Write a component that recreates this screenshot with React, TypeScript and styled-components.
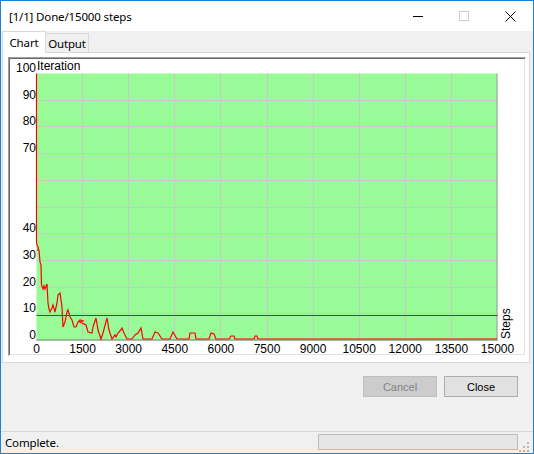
import React from "react";
import styled, { createGlobalStyle } from "styled-components";

const GlobalStyle = createGlobalStyle`
  html, body {
    margin: 0;
    padding: 0;
    background: #ffffff;
  }
  body {
    font-family: "Segoe UI", "Noto Sans", "Liberation Sans", sans-serif;
  }
`;

const uiText = `
  font-size: 11.5px;
  letter-spacing: -0.15px;
  color: #000000;
`;

const Window = styled.div`
  width: 534px;
  height: 454px;
  box-sizing: border-box;
  border: 1px solid #1883d7;
  display: flex;
  flex-direction: column;
  background: #f0f0f0;
`;

const TitleBar = styled.div`
  height: 30px;
  background: #ffffff;
  display: flex;
  align-items: center;
`;

const Title = styled.div`
  flex: 1;
  padding-left: 8px;
  ${uiText}
`;

const CaptionButton = styled.div`
  width: 46px;
  height: 30px;
  display: flex;
  align-items: center;
  justify-content: center;
`;

const TabStrip = styled.div`
  height: 21px;
  display: flex;
  align-items: flex-end;
  padding-left: 1px;
`;

const Tab = styled.div<{ $active?: boolean; $width: number }>`
  box-sizing: border-box;
  width: ${(p) => p.$width}px;
  height: ${(p) => (p.$active ? 22 : 19)}px;
  margin-bottom: ${(p) => (p.$active ? -1 : 0)}px;
  background: ${(p) => (p.$active ? "#ffffff" : "#f0f0f0")};
  border: 1px solid #d9d9d9;
  border-bottom: none;
  border-left: ${(p) => (p.$active ? "1px solid #d9d9d9" : "none")};
  ${uiText}
  display: flex;
  align-items: center;
  justify-content: center;
  position: relative;
  z-index: ${(p) => (p.$active ? 1 : 0)};
`;

const TabPanel = styled.div`
  box-sizing: border-box;
  margin-left: 1px;
  width: 528px;
  height: 311px;
  background: #ffffff;
  border: 1px solid #d9d9d9;
  padding: 4px 3px 6px 5px;
`;

const ChartBox = styled.div`
  width: 518px;
  height: 299px;
  box-sizing: border-box;
  border: 1px solid;
  border-color: #a0a0a0 #ffffff #ffffff #a0a0a0;
  box-shadow: inset 1px 1px 0 #696969, inset -1px -1px 0 #e3e3e3;
  padding: 1px;
  svg {
    display: block;
  }
`;

const ButtonRow = styled.div`
  height: 68px;
  box-sizing: border-box;
  padding: 13px 15px 0 0;
  display: flex;
  justify-content: flex-end;
  align-items: flex-start;
  gap: 7px;
`;

const DialogButton = styled.button`
  width: 74px;
  height: 21px;
  box-sizing: border-box;
  margin: 0;
  padding: 0;
  border: 1px solid #adadad;
  background: #e1e1e1;
  font-family: "Liberation Sans", Arial, sans-serif;
  font-size: 11px;
  color: #000000;
  &:disabled {
    border-color: #bfbfbf;
    background: #cccccc;
    color: #838383;
  }
`;

const StatusStrip = styled.div`
  height: 22px;
  box-sizing: border-box;
  border-top: 1px solid #d7d7d7;
  display: flex;
  align-items: flex-start;
`;

const StatusText = styled.div`
  flex: 1;
  padding: 3px 0 0 4px;
  ${uiText}
`;

const Progress = styled.div`
  margin-top: 2px;
  width: 200px;
  height: 16px;
  box-sizing: border-box;
  border: 1px solid #bcbcbc;
  background: #e6e6e6;
`;

const Grip = styled.div`
  width: 15px;
  height: 21px;
  display: flex;
  align-items: flex-end;
`;

const X0 = 36.5;
const X1 = 497.5;
const Y0 = 340.5;
const Y1 = 73.5;
const xAt = (step: number) => X0 + (step / 15000) * (X1 - X0);
const yAt = (v: number) => Y0 - (v / 100) * (Y0 - Y1);
const crisp = (n: number) => Math.floor(n) + 0.5;

const xTicks = [0, 1500, 3000, 4500, 6000, 7500, 9000, 10500, 12000, 13500, 15000];
const yTicks = [0, 10, 20, 30, 40, 50, 60, 70, 80, 90, 100];
// MSChart skipped these two labels
const hiddenY = [50, 60];

const curve: [number, number][] = [
  [36.5, 73.5], [36.5, 242], [37, 245], [38.5, 248], [37.5, 250], [39, 250], [40, 262],
  [41, 265], [41.5, 285], [43, 289], [44, 286], [45, 289], [47, 284], [48, 303],
  [49, 309], [50, 312], [52, 308], [53, 305], [55, 312], [57, 303], [58, 295],
  [60, 293], [62, 307], [63, 327], [65, 322], [67, 312], [68, 310], [70, 317],
  [72, 320], [74, 327], [76, 327], [78, 322], [80, 320], [83, 321], [80, 322],
  [86, 325], [88, 332], [92, 333], [93, 327], [96, 318], [98, 330], [101, 339],
  [103, 333], [107, 318], [109, 330], [112, 339], [115, 335], [116, 337], [118, 333],
  [120, 331], [122, 328], [124, 333], [127, 339], [132, 339], [135, 335], [138, 333],
  [141, 328], [143, 339], [152, 339], [155, 332], [158, 333], [162, 339], [170, 339],
  [173, 332], [177, 339], [189, 339], [190, 333], [195, 333], [196, 339], [209, 339],
  [211, 333], [214, 334], [216, 339], [229, 339], [231, 336], [234, 336], [235, 339],
  [254, 339], [255, 336], [257, 336], [258, 339], [497, 339],
];

const labelFont = {
  fontFamily: "'Liberation Sans', Arial, sans-serif",
  fontSize: 12,
  fill: "#000000",
};

const IterationChart = () => (
  <svg width={514} height={295} viewBox="10 59 514 295">
    <rect x={X0} y={Y1} width={X1 - X0} height={Y0 - Y1} fill="#98fb98" />
    {xTicks.slice(1, -1).map((t) => (
      <line key={t} x1={crisp(xAt(t))} x2={crisp(xAt(t))} y1={Y1} y2={Y0} stroke="#c8c8c8" />
    ))}
    {yTicks.slice(1, -1).map((t) => (
      <line key={t} x1={X0} x2={X1} y1={crisp(yAt(t))} y2={crisp(yAt(t))} stroke="#c8c8c8" />
    ))}
    <line x1={X1 - 0.5} x2={X1 - 0.5} y1={Y1} y2={Y0} stroke="#a0a0a0" />
    <line x1={X0} x2={X1} y1={Y0 - 0.5} y2={Y0 - 0.5} stroke="#808080" />
    <line x1={X0} x2={X1} y1={315.5} y2={315.5} stroke="#e00000" />
    <polyline
      points={curve.map(([x, y]) => `${x},${y}`).join(" ")}
      fill="none"
      stroke="#ff0000"
      strokeWidth={1.2}
    />
    {yTicks
      .filter((t) => !hiddenY.includes(t))
      .map((t) => (
        <text key={t} x={36} y={crisp(yAt(t)) - 1.5} textAnchor="end" {...labelFont}>
          {t}
        </text>
      ))}
    <text x={37} y={70} {...labelFont}>
      Iteration
    </text>
    {xTicks.map((t) => (
      <text key={t} x={xAt(t)} y={352.5} textAnchor="middle" {...labelFont}>
        {t}
      </text>
    ))}
    <text x={510} y={339} transform="rotate(-90 510 339)" {...labelFont}>
      Steps
    </text>
  </svg>
);

const App = () => (
  <>
    <GlobalStyle />
    <Window>
      <TitleBar>
        <Title>[1/1] Done/15000 steps</Title>
        <CaptionButton>
          <svg width="10" height="10" viewBox="0 0 10 10">
            <line x1="0" x2="10" y1="5.5" y2="5.5" stroke="#000" />
          </svg>
        </CaptionButton>
        <CaptionButton>
          <svg width="10" height="10" viewBox="0 0 10 10">
            <rect x="0.5" y="0.5" width="9" height="9" fill="none" stroke="#cccccc" />
          </svg>
        </CaptionButton>
        <CaptionButton>
          <svg width="11" height="11" viewBox="0 0 11 11">
            <path d="M0.5 0.5 L10.5 10.5 M10.5 0.5 L0.5 10.5" stroke="#000" strokeWidth="1" />
          </svg>
        </CaptionButton>
      </TitleBar>
      <TabStrip>
        <Tab $active $width={44}>Chart</Tab>
        <Tab $width={43}>Output</Tab>
      </TabStrip>
      <TabPanel>
        <ChartBox>
          <IterationChart />
        </ChartBox>
      </TabPanel>
      <ButtonRow>
        <DialogButton disabled>Cancel</DialogButton>
        <DialogButton>Close</DialogButton>
      </ButtonRow>
      <StatusStrip>
        <StatusText>Complete.</StatusText>
        <Progress />
        <Grip>
          <svg width="12" height="12" viewBox="0 0 12 12">
            {[
              [9, 1],
              [9, 5], [5, 5],
              [9, 9], [5, 9], [1, 9],
            ].map(([x, y]) => (
              <rect key={`${x}-${y}`} x={x} y={y} width="2" height="2" fill="#b8b8b8" />
            ))}
          </svg>
        </Grip>
      </StatusStrip>
    </Window>
  </>
);

export default App;
